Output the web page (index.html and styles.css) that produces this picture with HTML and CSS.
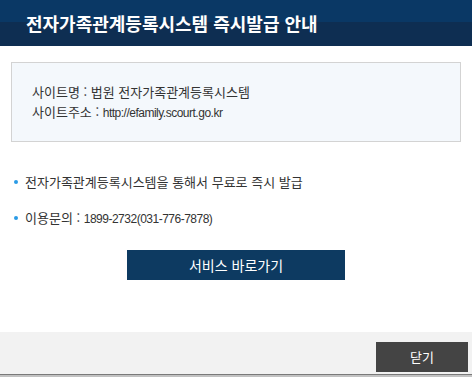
FILE: index.html
```html
<!DOCTYPE html>
<html lang="ko">
<head>
    <meta charset="UTF-8">
    <meta name="viewport" content="width=device-width, initial-scale=1.0">
    <title>전자가족관계등록시스템 즉시발급 안내</title>
    <link rel="stylesheet" href="styles.css">
</head>
<body>
    <div class="popup">
        <div class="pop-head">
            <h1>전자가족관계등록시스템 즉시발급 안내</h1>
        </div>

        <div class="pop-body">
            <div class="site-box">
                <p>사이트명 : 법원 전자가족관계등록시스템</p>
                <p>사이트주소 : <span class="en">http://efamily.scourt.go.kr</span></p>
            </div>

            <ul class="info-list">
                <li>전자가족관계등록시스템을 통해서 무료로 즉시 발급</li>
                <li>이용문의 : <span class="en">1899-2732(031-776-7878)</span></li>
            </ul>

            <div class="btn-wrap">
                <a href="javascript:;" class="btn-go">서비스 바로가기</a>
            </div>
        </div>

        <!-- footer -->
        <div class="pop-foot">
            <a href="javascript:;" class="btn-close">닫기</a>
        </div>
    </div>
</body>
</html>
```

FILE: styles.css
```css
*{
    margin: 0;
    padding: 0;
    box-sizing: border-box;
}
html, body{
    height: 100%;
}
body{
    font-family: "Noto Sans CJK KR", "Noto Sans", sans-serif;
    font-size: 13px;
    color: #333;
    background: #fff;
}
a{
    text-decoration: none;
}
.en{
    font-family: "Liberation Sans", sans-serif;
    font-size: 12px;
    letter-spacing: -0.5px;
}
.popup{
    display: flex;
    flex-direction: column;
    width: 472px;
    height: 377px;
}
.pop-head{
    height: 46px;
    padding-left: 26px;
    display: flex;
    align-items: center;
    background: linear-gradient(to bottom, #0a3865 0, #0a3865 22px, #0e2e52 22px, #0e2e52 100%);
}
.pop-head h1{
    font-size: 18px;
    font-weight: bold;
    color: #fff;
    line-height: 1;
    margin-top: -1px;
}
.pop-body{
    flex: 1;
    padding: 16px 11px 0 11px;
}
.site-box{
    width: 450px;
    height: 80px;
    padding: 19px 20px 0 20px;
    border: 1px solid #d3d3d3;
    background: #f4f8fc;
}
.site-box p{
    line-height: 20px;
}
.info-list{
    list-style: none;
    margin-top: 30px;
}
.info-list li{
    position: relative;
    padding-left: 14px;
    line-height: 20px;
    margin-bottom: 16px;
}
.info-list li:last-child{
    margin-bottom: 0;
}
.info-list li::before{
    content: "";
    position: absolute;
    left: 3px;
    top: 8px;
    width: 4px;
    height: 4px;
    border-radius: 50%;
    background: #2a9be6;
}
.btn-wrap{
    display: flex;
    justify-content: center;
    margin-top: 21px;
}
.btn-go{
    width: 218px;
    height: 30px;
    line-height: 30px;
    text-align: center;
    font-size: 14px;
    color: #fff;
    background: #0d3a61;
}
.pop-foot{
    height: 43px;
    display: flex;
    justify-content: flex-end;
    padding: 10px 4px 0 0;
    background: #f2f2f2;
    border-bottom: 1px solid #7a7a7a;
    margin-bottom: 2px;
    box-shadow: 0 2px 0 #c2c2c2;
}
.btn-close{
    width: 92px;
    height: 30px;
    line-height: 30px;
    text-align: center;
    font-size: 13px;
    color: #fff;
    background: #444;
}
```
